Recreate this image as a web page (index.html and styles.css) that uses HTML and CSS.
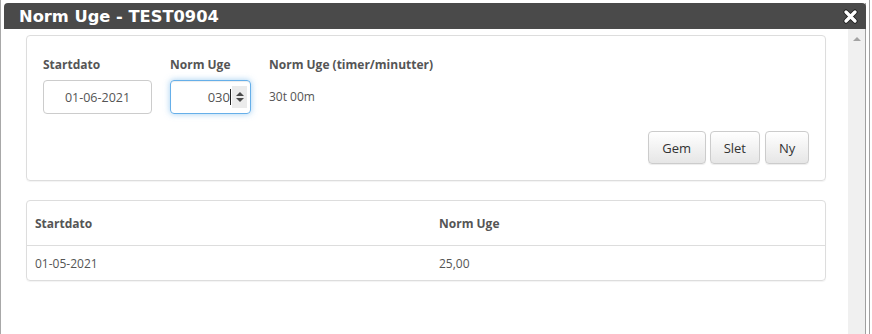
FILE: index.html
```html
<!DOCTYPE html>
<html lang="da">
<head>
    <meta charset="UTF-8">
    <meta name="viewport" content="width=device-width, initial-scale=1.0">
    <title>Norm Uge - TEST0904</title>
    <link rel="stylesheet" href="styles.css">
</head>
<body>

<div class="frame">
    <div class="dialog">
        <div class="titlebar">
            <span class="title">Norm Uge - TEST0904</span>
            <span class="close">
                <svg width="15" height="15" viewBox="0 0 15 15">
                    <path d="M3 3 L12 12 M12 3 L3 12" stroke="#1a1a1a" stroke-width="5" stroke-linecap="round"/>
                    <path d="M3 3 L12 12 M12 3 L3 12" stroke="#fff" stroke-width="3.4" stroke-linecap="round"/>
                </svg>
            </span>
        </div>
        <div class="dialog-body">
            <div class="content">
                <div class="card form-card">
                    <div class="form-row">
                        <div class="field">
                            <label>Startdato</label>
                            <div class="input date">01-06-2021</div>
                        </div>
                        <div class="field">
                            <label>Norm Uge</label>
                            <div class="input number focus">
                                <span>030</span><span class="caret"></span>
                                <span class="spinner">
                                    <svg width="10" height="14" viewBox="0 0 10 14">
                                        <path d="M1 6 L5 2 L9 6 Z M1 8 L5 12 L9 8 Z" fill="#4a4a4a"/>
                                    </svg>
                                </span>
                            </div>
                        </div>
                        <div class="field">
                            <label>Norm Uge (timer/minutter)</label>
                            <div class="value">30t 00m</div>
                        </div>
                    </div>
                    <div class="buttons">
                        <button class="btn gem">Gem</button>
                        <button class="btn">Slet</button>
                        <button class="btn ny">Ny</button>
                    </div>
                </div>

                <div class="card table-card">
                    <table>
                        <thead>
                            <tr><th class="col1">Startdato</th><th>Norm Uge</th></tr>
                        </thead>
                        <tbody>
                            <tr><td class="col1">01-05-2021</td><td>25,00</td></tr>
                        </tbody>
                    </table>
                </div>
            </div>
            <div class="scrollbar">
                <span class="arrow-up"></span>
            </div>
        </div>
    </div>
    <div class="edge"></div>
</div>

</body>
</html>
```

FILE: styles.css
```css
body {
    margin: 0;
    background-color: #fff;
    font-family: "Open Sans", Arial, sans-serif;
    color: #555;
    font-size: 12px;
}

.frame {
    display: flex;
    height: 334px;
    border-left: 1px solid #a8a8a8;
    box-sizing: border-box;
}

.dialog {
    width: 861px;
    margin-left: 3px;
    margin-top: 3px;
    display: flex;
    flex-direction: column;
    border-right: 1px solid #a0a0a0;
}

.titlebar {
    height: 26px;
    background-color: #4a4a4a;
    border-radius: 4px 4px 0 0;
    display: flex;
    align-items: center;
    justify-content: space-between;
    padding: 0 8px 0 15px;
    margin-right: -1px;
}

.title {
    font-family: "DejaVu Sans", Verdana, sans-serif;
    font-weight: bold;
    font-size: 16.3px;
    color: #fff;
}

.close {
    display: flex;
    margin-top: 1px;
}

.dialog-body {
    flex: 1;
    display: flex;
}

.content {
    flex: 1;
    padding: 6px 22px 0 22px;
}

.scrollbar {
    width: 17px;
    background-color: #f0f0f0;
    display: flex;
    justify-content: center;
}

.arrow-up {
    margin-top: 8px;
    width: 0;
    height: 0;
    border-left: 4px solid transparent;
    border-right: 4px solid transparent;
    border-bottom: 4px solid #a3a3a3;
}

.edge {
    width: 1px;
    margin-left: 3px;
    background-color: #a0a0a0;
}

.card {
    border: 1px solid #dddddd;
    border-radius: 4px;
    box-shadow: 0 1px 1px rgba(0,0,0,0.05);
}

.form-card {
    padding: 16px;
}

.form-row {
    display: flex;
    gap: 18px;
}

.field label {
    display: block;
    font-weight: bold;
    line-height: 22px;
    margin-top: 2px;
    margin-bottom: 4px;
}

.input {
    box-sizing: border-box;
    height: 34px;
    border: 1px solid #ccc;
    border-radius: 4px;
    font-size: 12.5px;
    display: flex;
    align-items: center;
}

.date {
    width: 109px;
    justify-content: center;
}

.number {
    width: 81px;
    justify-content: flex-end;
    padding-right: 3px;
    font-size: 13px;
}

.focus {
    border-color: #66afe9;
    box-shadow: inset 0 1px 1px rgba(0,0,0,0.075), 0 0 6px rgba(102,175,233,0.6);
}

.caret {
    width: 1px;
    height: 16px;
    background-color: #222;
    margin-right: 1px;
}

.spinner {
    width: 15px;
    height: 22px;
    background-color: #ebebeb;
    display: flex;
    align-items: center;
    justify-content: center;
}

.value {
    line-height: 34px;
}

.buttons {
    display: flex;
    justify-content: flex-end;
    gap: 4px;
    margin-top: 17px;
}

.btn {
    box-sizing: border-box;
    height: 33px;
    padding: 0 13px;
    font-family: "Open Sans", Arial, sans-serif;
    font-size: 13px;
    color: #333;
    border: 1px solid #ccc;
    border-radius: 4px;
    background: linear-gradient(#ffffff, #e6e6e6);
    box-shadow: inset 0 1px 0 rgba(255,255,255,0.15), 0 1px 1px rgba(0,0,0,0.075);
}

.btn.gem {
    width: 58px;
}

.btn.ny {
    width: 44px;
    margin-left: 1px;
}

.table-card {
    margin-top: 19px;
}

table {
    width: 100%;
    border-collapse: collapse;
    table-layout: fixed;
}

th, td {
    text-align: left;
    padding: 0 8px;
}

th {
    height: 44px;
    font-weight: bold;
    border-bottom: 1px solid #ddd;
}

td {
    height: 34px;
}

.col1 {
    width: 388px;
}
```
